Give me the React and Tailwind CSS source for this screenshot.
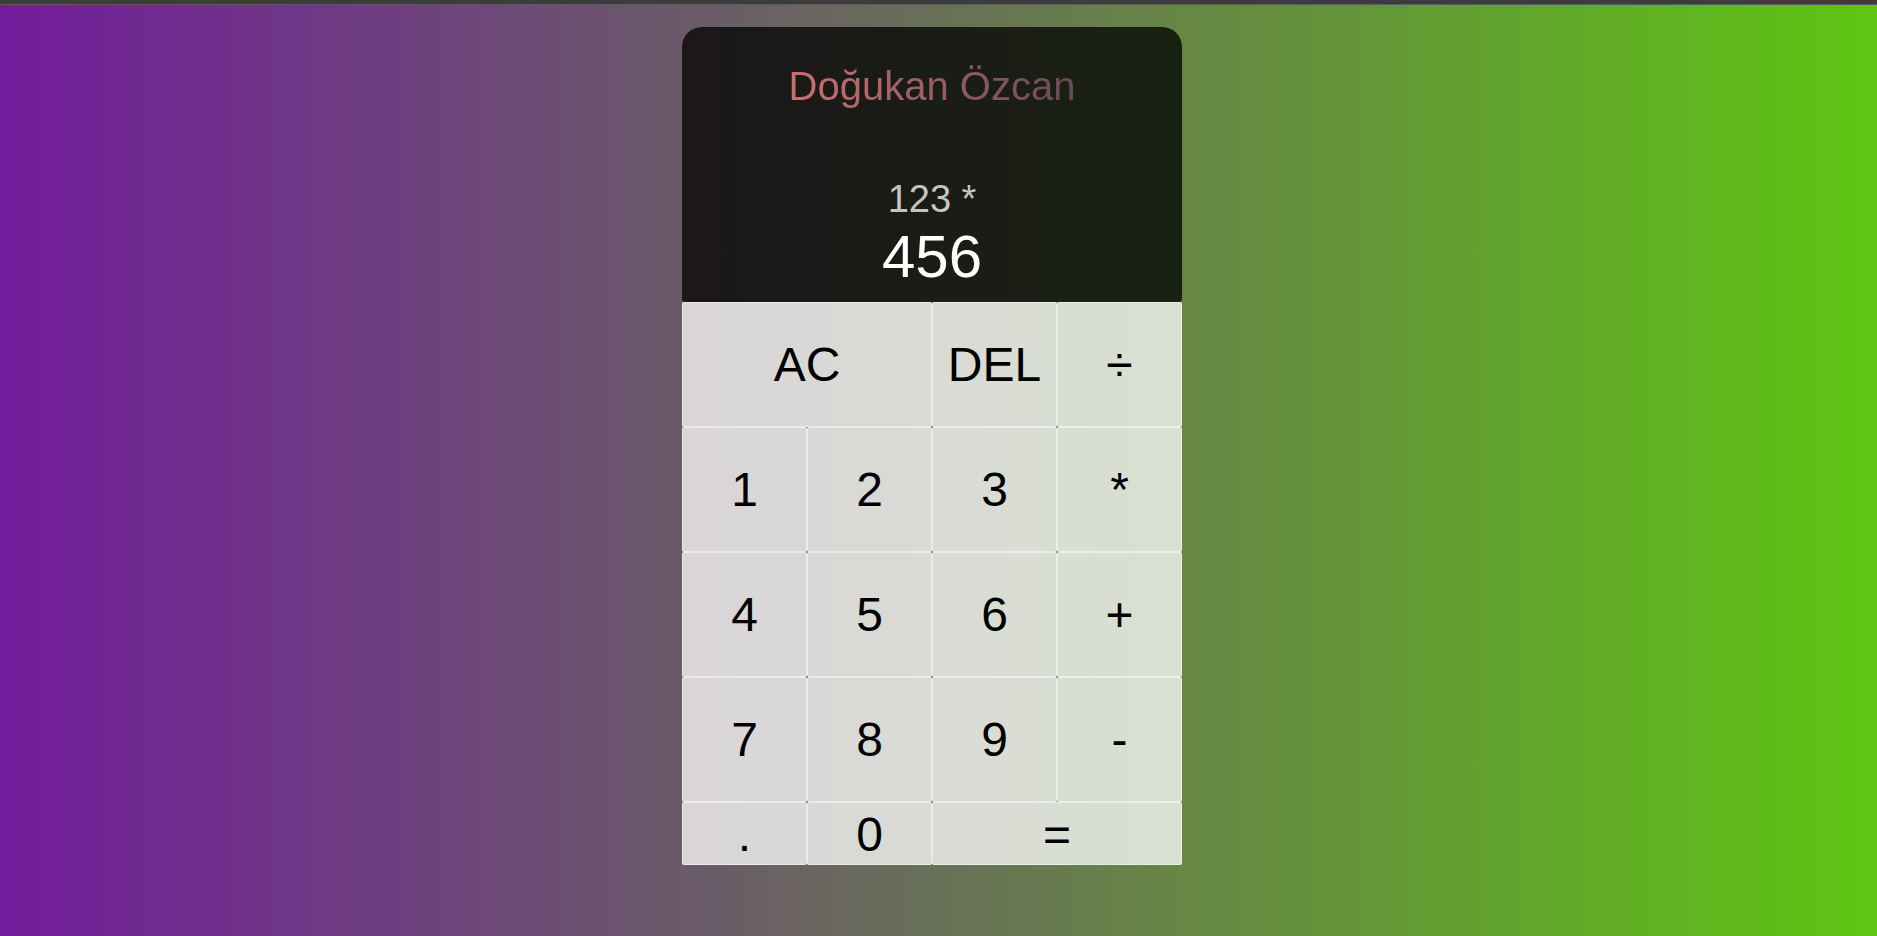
import React, { useState } from 'react';

const font = { fontFamily: '"Liberation Sans", Arial, sans-serif' };

const App = () => {
  const [previous] = useState('123 *');
  const [current] = useState('456');

  const btn = 'bg-white/75 border border-white/50 rounded-[2px] text-[48px] text-black cursor-pointer outline-none';
  const lastBtn = `${btn} leading-[48px] pt-[3px]`;

  return (
    <div className="min-h-screen w-full flex flex-col bg-linear-to-r/srgb from-[#721c9c] to-[#5ec512]" style={font}>
      {/* top strip */}
      <div className="h-[5px] bg-[#3c3c3c] border-b border-[#5c5c5c]" />

      <div className="flex justify-center pr-[13px] pt-[22px]">
        <div className="grid grid-cols-[repeat(4,125px)] grid-rows-[275px_repeat(4,125px)_63px]">
          {/* display */}
          <div className="col-span-4 bg-black/75 rounded-t-[20px] rounded-b-[3px] flex flex-col items-center pt-[36px] pb-[15px]">
            <h1 className="text-[40px] leading-[46px] font-normal bg-linear-to-r/srgb from-[#ca7070] to-[#6a4a5a] bg-clip-text text-transparent">
              Doğukan Özcan
            </h1>
            <div className="flex-1" />
            <div className="text-[38px] leading-[38px] text-white/75">{previous}</div>
            <div className="text-[60px] leading-[60px] text-white mt-[9px]">{current}</div>
          </div>

          <button className={`${btn} col-span-2`}>AC</button>
          <button className={btn}>DEL</button>
          <button className={btn}>÷</button>

          <button className={btn}>1</button>
          <button className={btn}>2</button>
          <button className={btn}>3</button>
          <button className={btn}>*</button>

          <button className={btn}>4</button>
          <button className={btn}>5</button>
          <button className={btn}>6</button>
          <button className={btn}>+</button>

          <button className={btn}>7</button>
          <button className={btn}>8</button>
          <button className={btn}>9</button>
          <button className={btn}>-</button>

          <button className={lastBtn}>.</button>
          <button className={lastBtn}>0</button>
          <button className={`${lastBtn} col-span-2`}>=</button>
        </div>
      </div>
    </div>
  );
};

export default App;
